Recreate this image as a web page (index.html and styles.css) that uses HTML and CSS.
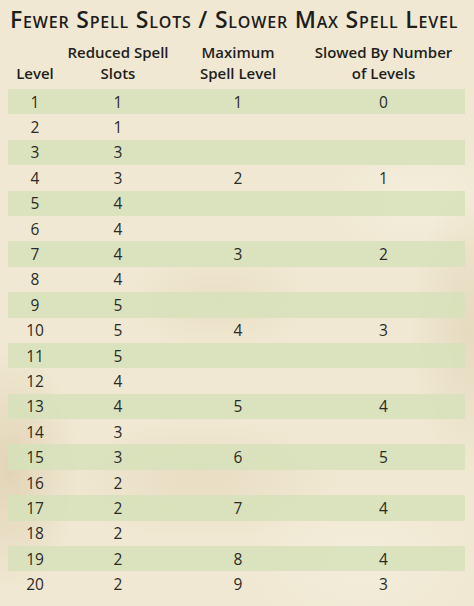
FILE: index.html
```html
<!DOCTYPE html>
<html>
<head>
<meta charset="utf-8">
<link rel="stylesheet" href="styles.css">
</head>
<body>
<div class="page">
  <h1 class="title">Fewer Spell Slots / Slower Max Spell Level</h1>
  <table class="spells">
    <colgroup>
      <col class="c1"><col class="c2"><col class="c3"><col class="c4">
    </colgroup>
    <thead>
      <tr>
        <th>Level</th>
        <th>Reduced Spell<br>Slots</th>
        <th>Maximum<br>Spell Level</th>
        <th>Slowed By Number<br>of Levels</th>
      </tr>
    </thead>
    <tbody>
      <tr><td>1</td><td>1</td><td>1</td><td>0</td></tr>
      <tr><td>2</td><td>1</td><td></td><td></td></tr>
      <tr><td>3</td><td>3</td><td></td><td></td></tr>
      <tr><td>4</td><td>3</td><td>2</td><td>1</td></tr>
      <tr><td>5</td><td>4</td><td></td><td></td></tr>
      <tr><td>6</td><td>4</td><td></td><td></td></tr>
      <tr><td>7</td><td>4</td><td>3</td><td>2</td></tr>
      <tr><td>8</td><td>4</td><td></td><td></td></tr>
      <tr><td>9</td><td>5</td><td></td><td></td></tr>
      <tr><td>10</td><td>5</td><td>4</td><td>3</td></tr>
      <tr><td>11</td><td>5</td><td></td><td></td></tr>
      <tr><td>12</td><td>4</td><td></td><td></td></tr>
      <tr><td>13</td><td>4</td><td>5</td><td>4</td></tr>
      <tr><td>14</td><td>3</td><td></td><td></td></tr>
      <tr><td>15</td><td>3</td><td>6</td><td>5</td></tr>
      <tr><td>16</td><td>2</td><td></td><td></td></tr>
      <tr><td>17</td><td>2</td><td>7</td><td>4</td></tr>
      <tr><td>18</td><td>2</td><td></td><td></td></tr>
      <tr><td>19</td><td>2</td><td>8</td><td>4</td></tr>
      <tr><td>20</td><td>2</td><td>9</td><td>3</td></tr>
    </tbody>
  </table>
</div>
</body>
</html>
```

FILE: styles.css
```css
html, body {
  margin: 0;
  padding: 0;
}
body {
  width: 474px;
  height: 606px;
  overflow: hidden;
  background-color: #f0e8d2;
  background-image:
    radial-gradient(ellipse 70px 120px at 10px 470px, rgba(212, 192, 155, 0.5), rgba(212, 192, 155, 0) 100%),
    radial-gradient(ellipse 90px 50px at 220px 300px, rgba(222, 205, 170, 0.35), rgba(222, 205, 170, 0) 100%),
    radial-gradient(ellipse 140px 60px at 200px 480px, rgba(220, 200, 165, 0.35), rgba(220, 200, 165, 0) 100%),
    radial-gradient(ellipse 60px 140px at 470px 330px, rgba(215, 198, 162, 0.4), rgba(215, 198, 162, 0) 100%),
    radial-gradient(ellipse 100px 60px at 420px 200px, rgba(247, 242, 228, 0.6), rgba(247, 242, 228, 0) 100%),
    radial-gradient(ellipse 120px 80px at 360px 560px, rgba(247, 242, 228, 0.5), rgba(247, 242, 228, 0) 100%);
  font-family: "Open Sans", "Liberation Sans", sans-serif;
  color: #222;
}
.page {
  padding: 4px 9px 0 8px;
}
.title {
  margin: 0 0 0 2px;
  font-size: 23px;
  line-height: 30px;
  font-weight: 600;
  font-variant: small-caps;
  letter-spacing: 0.8px;
  color: #1d1d1b;
  white-space: nowrap;
}
.spells {
  margin-top: 8px;
  width: 457px;
  border-collapse: collapse;
  table-layout: fixed;
}
.c1 { width: 54px; }
.c2 { width: 112px; }
.c3 { width: 128px; }
.c4 { width: 163px; }
.spells th {
  font-size: 15px;
  font-weight: 600;
  line-height: 21px;
  vertical-align: bottom;
  text-align: center;
  padding: 0 0 5px 0;
  color: #1f1f1d;
  white-space: nowrap;
}
.spells td {
  height: 25.4px;
  padding: 0;
  text-align: center;
  font-size: 15.5px;
  line-height: 20px;
  color: #2a2a28;
}
.spells tbody tr:nth-child(odd) {
  background-color: rgba(214, 226, 186, 0.85);
}
```
